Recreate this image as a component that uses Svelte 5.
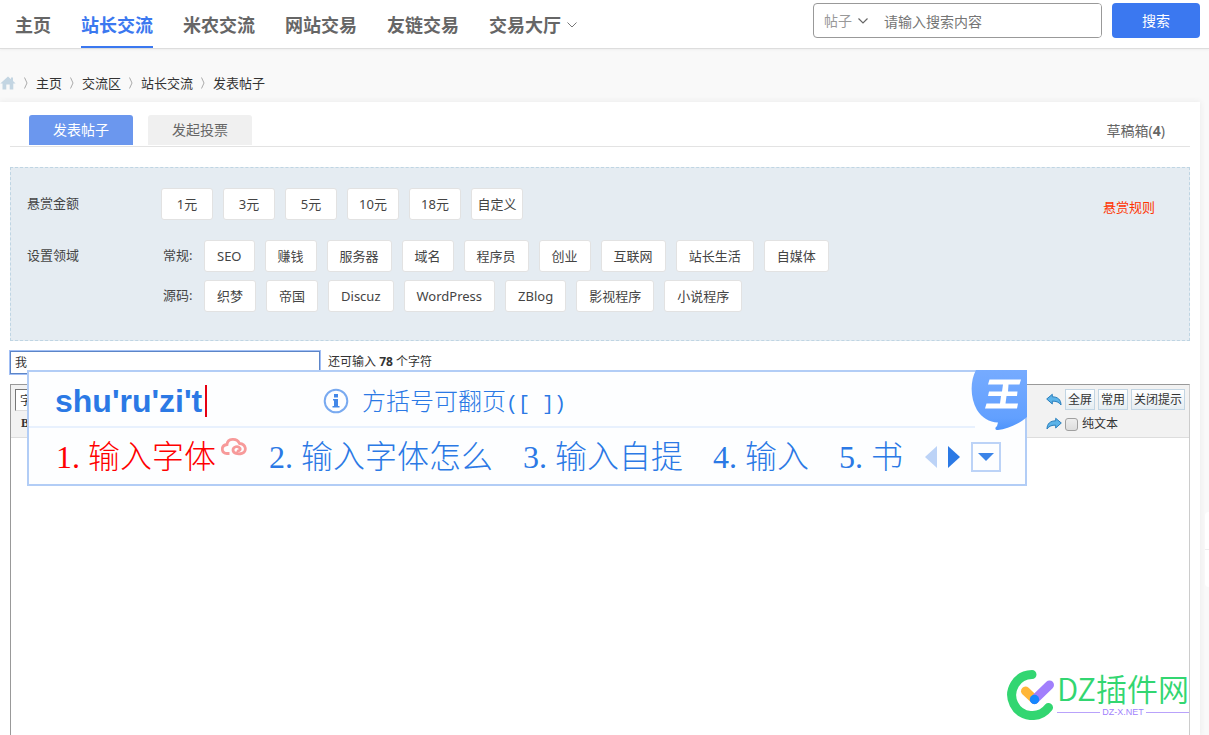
<script>
  const navItems = ['主页', '站长交流', '米农交流', '网站交易', '友链交易', '交易大厅'];
  let activeNav = $state('站长交流');

  const crumbs = ['主页', '交流区', '站长交流', '发表帖子'];

  const tabs = ['发表帖子', '发起投票'];
  let activeTab = $state('发表帖子');

  const amounts = ['1元', '3元', '5元', '10元', '18元', '自定义'];
  const fields = [
    {
      name: '常规:',
      tags: ['SEO', '赚钱', '服务器', '域名', '程序员', '创业', '互联网', '站长生活', '自媒体']
    },
    {
      name: '源码:',
      tags: ['织梦', '帝国', 'Discuz', 'WordPress', 'ZBlog', '影视程序', '小说程序']
    }
  ];

  let title = $state('我');
  let left = $derived(80 - title.length * 2);

  const candidates = ['输入字体', '输入字体怎么', '输入自提', '输入', '书'];
</script>

<div class="page">
  <header>
    <nav>
      {#each navItems as item}
        <a href="#nav" class:active={item === activeNav} onclick={() => (activeNav = item)}>
          {item}
          {#if item === '交易大厅'}
            <svg width="10" height="6" viewBox="0 0 10 6"><path d="M.5 .5 5 5 9.500 .5" fill="none" stroke="#777" /></svg>
          {/if}
        </a>
      {/each}
    </nav>
    <form class="search" onsubmit={(e) => e.preventDefault()}>
      <div class="search-box">
        <button type="button" class="kind">
          帖子
          <svg width="10" height="6" viewBox="0 0 10 6"><path d="M.5 .5 5 5 9.500 .5" fill="none" stroke="#666" stroke-width="1.200" /></svg>
        </button>
        <input type="text" placeholder="请输入搜索内容" aria-label="请输入搜索内容" />
      </div>
      <button type="submit" class="submit">搜索</button>
    </form>
  </header>

  <div class="crumbs">
    <a href="#home" aria-label="主页">
      <svg width="16" height="14" viewBox="0 0 16 14"><path d="M8 .5 .3 7.500H2.500V13.500H6.300V8.500H9.700V13.500H13.300V7.500H15.600L13 5V1.500H11V3.200Z" fill="#c3d5e2" /></svg>
    </a>
    {#each crumbs as crumb}
      <svg class="sep" width="4" height="12" viewBox="0 0 4 12"><path d="M.5 .5 3 6 .5 11.500" fill="none" stroke="#aaa" /></svg>
      <a href="#crumb">{crumb}</a>
    {/each}
  </div>

  <main>
    <div class="tabs">
      {#each tabs as tab}
        <button type="button" class:active={tab === activeTab} onclick={() => (activeTab = tab)}>{tab}</button>
      {/each}
      <a href="#draft">草稿箱(<b>4</b>)</a>
    </div>

    <section class="reward">
      <div class="line">
        <span class="label">悬赏金额</span>
        <div class="tags amounts">
          {#each amounts as amount}
            <button type="button">{amount}</button>
          {/each}
        </div>
        <a class="rule" href="#rule">悬赏规则</a>
      </div>
      <div class="line">
        <span class="label">设置领域</span>
        <div class="groups">
          {#each fields as field}
            <div class="tags">
              <span class="group-name">{field.name}</span>
              {#each field.tags as tag}
                <button type="button">{tag}</button>
              {/each}
            </div>
          {/each}
        </div>
      </div>
    </section>

    <div class="title-line">
      <input type="text" aria-label="标题" bind:value={title} />
      <span>还可输入 <b>{left}</b> 个字符</span>
    </div>

    <div class="editor">
      <div class="toolbar">
        <div class="tools">
          <select aria-label="字体"><option>字体</option></select>
          <button type="button" class="bold">B</button>
        </div>
        <div class="actions">
          <div class="action-row">
            <button type="button" class="arrow" aria-label="撤销">
              <svg width="16" height="14" viewBox="0 0 16 14"><path d="M.7 6 6.300 1.300V3.800C11.500 3.800 15 6.500 15 12 13 9 10 8 6.300 8.200V11Z" fill="#5cb3e8" stroke="#2a7fbd" /></svg>
            </button>
            <button type="button" class="text-btn">全屏</button>
            <button type="button" class="text-btn">常用</button>
            <button type="button" class="text-btn">关闭提示</button>
          </div>
          <div class="action-row">
            <button type="button" class="arrow" aria-label="重做">
              <svg width="16" height="14" viewBox="0 0 16 14"><path d="M15.300 6 9.700 1.300V3.800C4.500 3.800 1 6.500 1 12 3 9 6 8 9.700 8.200V11Z" fill="#5cb3e8" stroke="#2a7fbd" /></svg>
            </button>
            <label><input type="checkbox" />纯文本</label>
          </div>
        </div>
      </div>

      <div class="watermark">
        <svg width="48" height="50" viewBox="0 0 48 50">
          <path d="M25 4.500A20.500 20.500 0 1 0 41.500 37.500" fill="none" stroke="#32d671" stroke-width="9" stroke-linecap="round" />
          <path d="M18.500 21 27.500 29.500" stroke="#ffb637" stroke-width="9" stroke-linecap="round" />
          <path d="M42.500 15 27.500 29.500" stroke="#a17ffc" stroke-width="9" stroke-linecap="round" />
          <circle cx="27.500" cy="29.500" r="4.700" fill="#1687ff" />
        </svg>
        <div class="brand">
          <strong>DZ插件网</strong>
          <small>DZ-X.NET</small>
        </div>
      </div>

      <div class="ime">
        <div class="ime-top">
          <span class="pinyin">shu'ru'zi't</span>
          <svg class="info" width="26" height="26" viewBox="0 0 26 26">
            <circle cx="13" cy="13" r="11.300" fill="none" stroke="#79aaf0" stroke-width="2" />
            <path d="M11 6H15V9.500H11ZM10 11H15V18H16.500V19.500H9.500V18H11V12.500H10Z" fill="#4287e8" />
          </svg>
          <span class="hint">方括号可翻页<i>([ ])</i></span>
        </div>
        <div class="ime-list">
          {#each candidates as word, i}
            <span class="candidate" class:first={i === 0}>
              <i>{i + 1}.</i>{word}
              {#if i === 0}
                <svg width="26" height="20" viewBox="0 0 26 20"><path d="M8.500 16.500H6C0 16-.5 8.500 6 7.500 6.500 1 16 .5 18.500 6.500 25.500 7 26 15 21 16.300 17 17.500 12 16.500 12 13 12 9.500 17 8.500 18.800 11 20 13.200 17.500 14.500 16 13.300" fill="none" stroke="#f79a9a" stroke-width="2.800" /></svg>
              {/if}
            </span>
          {/each}
          <div class="pager">
            <button type="button" aria-label="上一页"><svg width="12" height="22" viewBox="0 0 12 22"><path d="M12 0V22L0 11Z" fill="#bcd3f7" /></svg></button>
            <button type="button" aria-label="下一页"><svg width="12" height="22" viewBox="0 0 12 22"><path d="M0 0V22L12 11Z" fill="#2b79e5" /></svg></button>
            <button type="button" class="more" aria-label="更多"><svg width="16" height="8" viewBox="0 0 16 8"><path d="M0 0H16L8 8Z" fill="#3b84e8" /></svg></button>
          </div>
        </div>
        <svg class="king" width="56" height="60" viewBox="0 0 56 60">
          <defs>
            <linearGradient id="bubble" x1="0" y1="0" x2="0" y2="1">
              <stop offset="0" stop-color="#76abff" />
              <stop offset="0.800" stop-color="#62a0ff" />
              <stop offset="1" stop-color="#4d94fb" />
            </linearGradient>
          </defs>
          <path d="M5 0H56V47C48 54 36 59 27 60 24 60 23.500 58 26 56L27 52.500C18 52 11 48 6 40 -1 28 -1 11 5 0Z" fill="url(#bubble)" />
          <path d="M18.500 9.500H50L48.500 14.500H37.500L37 21.500H46.500L46 26H35.500L34.500 33.500H47L46 38.500H14L15.500 33.500H29L30 26H17L18 21.500H31L32 14.500H17Z" fill="#fff" />
        </svg>
      </div>
    </div>
  </main>

  <aside><span></span><span></span></aside>
</div>

<style>
  :global(body) {
    margin: 0;
    background: #f9f9f9;
  }

  .page {
    display: flex;
    flex-direction: column;
    height: 100vh;
    overflow: hidden;
    font: 13px/20px "Noto Sans", "Noto Sans CJK SC", sans-serif;
    color: #444;
  }

  a {
    color: inherit;
    text-decoration: none;
  }

  button,
  input,
  select {
    box-sizing: border-box;
    margin: 0;
    padding: 0;
    font: inherit;
    color: inherit;
  }

  button {
    border: 0;
    background: none;
    cursor: pointer;
  }

  svg {
    display: block;
    flex: none;
  }

  i {
    font-style: normal;
  }

  header {
    display: flex;
    justify-content: space-between;
    height: 48px;
    flex: none;
    padding: 0 9px 0 15px;
    background: #fff;
    border-bottom: 1px solid #ddd;
    box-shadow: 0 1px 2px #eee;
  }

  nav {
    display: flex;
    gap: 30px;
  }

  nav a {
    display: flex;
    align-items: center;
    gap: 6px;
    box-sizing: border-box;
    height: 48px;
    padding-top: 4px;
    border-bottom: 2px solid transparent;
    font-size: 18px;
    font-weight: bold;
    color: #666;
    white-space: nowrap;
  }

  nav a.active {
    color: #3b78f0;
    border-color: #3b78f0;
  }

  .search {
    display: flex;
    gap: 10px;
    height: 35px;
    margin-top: 3px;
    font-size: 14px;
  }

  .search-box {
    display: flex;
    box-sizing: border-box;
    width: 289px;
    border: 1px solid #999;
    border-radius: 4px;
    overflow: hidden;
  }

  .kind {
    display: flex;
    align-items: center;
    gap: 6px;
    padding: 0 16px 0 10px;
    color: #999;
    white-space: nowrap;
  }

  .search-box input {
    flex: 1;
    min-width: 0;
    padding-top: 2px;
    border: 0;
    outline: 0;
  }

  .search-box input::placeholder {
    color: #757575;
  }

  .submit {
    width: 88px;
    border-radius: 4px;
    background: #3b78f0;
    color: #fff;
  }

  .crumbs {
    display: flex;
    align-items: center;
    box-sizing: border-box;
    flex: none;
    height: 53px;
    padding-top: 14px;
    color: #333;
  }

  .sep {
    margin: 0 8px;
  }

  main {
    display: flex;
    flex-direction: column;
    flex: 1;
    min-height: 0;
    margin-right: 9px;
    padding: 13px 10px 0;
    background: #fff;
    box-shadow: 0 0 6px #e8e8e8;
  }

  .tabs {
    display: flex;
    gap: 15px;
    flex: none;
    height: 31px;
    padding: 0 25px 0 19px;
    border-bottom: 1px solid #e3e3e3;
    font-size: 14px;
    color: #666;
  }

  .tabs button {
    width: 104px;
    height: 30px;
    border-radius: 3px 3px 0 0;
    background: #f0f0f0;
  }

  .tabs button.active {
    background: #6b97ee;
    color: #fff;
  }

  .tabs a {
    margin-left: auto;
    padding-top: 6px;
  }

  .reward {
    display: flex;
    flex-direction: column;
    gap: 20px;
    flex: none;
    margin-top: 20px;
    padding: 20px 34px 28px 16px;
    border: 1px dashed #bfd5e3;
    background: #e5ecf2;
  }

  .line {
    display: flex;
  }

  .label {
    width: 134px;
    flex: none;
    line-height: 30px;
  }

  .groups {
    display: flex;
    flex-direction: column;
    gap: 8px;
  }

  .tags {
    display: flex;
    gap: 10px;
  }

  .tags button {
    height: 32px;
    padding: 0 12px;
    border: 1px solid #e2e2e2;
    border-radius: 3px;
    background: #fff;
    white-space: nowrap;
  }

  .amounts button {
    width: 52px;
    padding: 0;
  }

  .group-name {
    width: 31px;
    padding-left: 2px;
    line-height: 30px;
    white-space: nowrap;
  }

  .rule {
    margin-left: auto;
    padding-top: 9px;
    color: #ff3300;
  }

  .title-line {
    display: flex;
    align-items: center;
    gap: 8px;
    flex: none;
    height: 24px;
    margin: 9px 0 10px;
    font-size: 12px;
    color: #333;
  }

  .title-line input {
    width: 310px;
    height: 23px;
    padding: 0 4px;
    border: 1px solid #5c85c8;
    outline: 1px solid #a3c0f5;
    outline-offset: 0;
  }

  .editor {
    position: relative;
    flex: 1;
    border: 1px solid #ccc;
    border-color: #999 #ccc #999 #999;
    border-bottom: 0;
    font-size: 12px;
  }

  .toolbar {
    display: flex;
    justify-content: space-between;
    padding: 4px 4px 3px;
    border-bottom: 1px solid #ddd;
    background: #f2f2f2;
    color: #333;
  }

  .tools {
    display: flex;
    flex-direction: column;
    align-items: flex-start;
    gap: 2px;
  }

  select {
    width: 90px;
    height: 22px;
    border: 1px solid #888;
    border-color: #777 #ddd #ddd #777;
    background: #fff;
  }

  .bold {
    width: 20px;
    font: bold 12px/20px "Liberation Serif", serif;
  }

  .actions {
    display: flex;
    flex-direction: column;
    gap: 4px;
  }

  .action-row {
    display: flex;
    align-items: center;
    gap: 3px;
  }

  .text-btn {
    height: 21px;
    padding: 0 2px;
    border: 1px solid #c2d5e3;
    background: linear-gradient(#fff, #e5edf2);
    line-height: 18px;
    white-space: nowrap;
  }

  label {
    display: flex;
    align-items: center;
    gap: 4px;
  }

  label input {
    appearance: none;
    width: 13px;
    height: 13px;
    border: 1px solid #a0a0a0;
    border-radius: 3px;
    background: linear-gradient(#eee, #ddd);
  }

  label input:checked {
    background: #3b78f0;
  }

  .watermark {
    position: absolute;
    right: 0;
    bottom: 15px;
    display: flex;
    gap: 2px;
    color: #32d671;
  }

  .brand {
    display: flex;
    flex-direction: column;
    font-family: "Noto Sans CJK SC", sans-serif;
  }

  .brand strong {
    font-size: 31px;
    font-weight: 350;
    line-height: 36px;
    white-space: nowrap;
  }

  .brand small {
    display: flex;
    align-items: center;
    gap: 2px;
    font: 9px/12px "Liberation Sans", sans-serif;
    color: #a17ffc;
  }

  .brand small::before,
  .brand small::after {
    content: "";
    flex: 1;
    height: 1px;
    background: #b9a2fb;
  }

  /* input method window floating over the title and the toolbar */
  .ime {
    position: absolute;
    top: -15px;
    left: 16px;
    box-sizing: border-box;
    width: 1000px;
    border: 2px solid #b2cdf6;
    background: #fdfeff;
    color: #2b79e5;
    font-family: "Liberation Serif", "Noto Sans CJK SC", serif;
    font-weight: 300;
    white-space: nowrap;
  }

  .ime-top {
    display: flex;
    align-items: center;
    height: 54px;
    margin-right: 50px;
    padding: 0 26px;
    border-bottom: 2px solid #e8f1fe;
  }

  .pinyin {
    margin-top: 4px;
    padding-right: 3px;
    border-right: 2px solid #e60012;
    font: bold 32px/32px "Liberation Sans", sans-serif;
  }

  .info {
    margin: 4px 13px 0 auto;
  }

  .hint {
    flex: 0 0 587px;
    padding-top: 8px;
    font-size: 24px;
    line-height: 32px;
  }

  .hint i {
    font: 20px/32px "Liberation Mono", monospace;
  }

  .ime-list {
    display: flex;
    align-items: center;
    gap: 30px;
    height: 54px;
    padding: 2px 22px 0 27px;
    font-size: 32px;
    line-height: 40px;
  }

  .candidate {
    display: flex;
  }

  .candidate i {
    width: 32px;
  }

  .candidate.first {
    margin-right: -8px;
    color: #f00;
  }

  .candidate svg {
    margin-left: 5px;
  }

  .pager {
    display: flex;
    align-items: center;
    gap: 11px;
    margin-left: -8px;
  }

  .more {
    display: flex;
    align-items: center;
    justify-content: center;
    width: 30px;
    height: 30px;
    border: 2px solid #bcd3f7;
  }

  .king {
    position: absolute;
    top: -2px;
    right: -2px;
  }

  aside {
    position: fixed;
    right: 0;
    top: 512px;
    width: 4px;
    overflow: hidden;
    border-radius: 12px 0 0 12px;
    background: #fff;
  }

  aside span {
    display: block;
    height: 37px;
  }

  aside span + span {
    border-top: 1px solid #eee;
  }
</style>
